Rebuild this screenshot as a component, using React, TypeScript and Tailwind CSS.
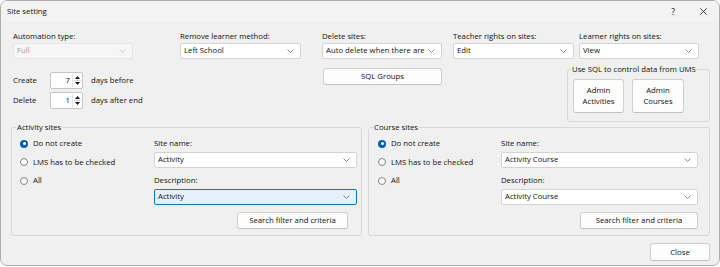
import { clsx } from "clsx";

function Chevron({ light }: { light?: boolean }) {
  return (
    <svg width="7" height="4" viewBox="0 0 7 4" className="shrink-0">
      <path
        d="M0.5 0.5 L3.5 3.5 L6.5 0.5"
        fill="none"
        stroke={light ? "#c4c4c4" : "#6b6b6b"}
        strokeWidth="0.8"
      />
    </svg>
  );
}

function Combo({
  value,
  className,
  disabled,
  focused,
}: {
  value: string;
  className?: string;
  disabled?: boolean;
  focused?: boolean;
}) {
  return (
    <div
      className={clsx(
        "flex h-[16px] items-center gap-[1px] rounded-[2px] border pl-[3px] pr-[6px]",
        disabled && "border-[#e6e6e6] bg-[#f6f6f6] text-[#a3a3a3]",
        focused && "border-[#0078d4] bg-[#e5f1fb]",
        !disabled && !focused && "border-[#d3d3d3] bg-white",
        className,
      )}
    >
      <span className="min-w-0 flex-1 overflow-hidden whitespace-nowrap">{value}</span>
      <Chevron light={disabled} />
    </div>
  );
}

function Label({ children, className }: { children: string; className?: string }) {
  return <div className={clsx("h-[11px] leading-[11px] whitespace-nowrap", className)}>{children}</div>;
}

function Button({ children, className }: { children: React.ReactNode; className?: string }) {
  return (
    <div
      className={clsx(
        "flex items-center justify-center rounded-[3px] border border-[#d0d0d0] border-b-[#c2c2c2] bg-[#fdfdfd] text-center leading-[11px]",
        className,
      )}
    >
      {children}
    </div>
  );
}

function Spin({ value }: { value: string }) {
  return (
    <div className="flex h-[17px] w-[33px] items-center rounded-[2px] border border-[#c6c6c6] bg-white">
      <span className="flex-1 pr-[2px] text-right leading-[11px]">{value}</span>
      <div className="mr-[1px] flex h-[13px] w-[9px] flex-col items-center justify-center gap-[1px] border-l border-[#e2e2e2]">
        <svg width="5" height="3" viewBox="0 0 5 3">
          <path d="M0 3 L2.5 0 L5 3 Z" fill="#1a1a1a" />
        </svg>
        <div className="h-px w-[7px] bg-[#d4d4d4]" />
        <svg width="5" height="3" viewBox="0 0 5 3">
          <path d="M0 0 L2.5 3 L5 0 Z" fill="#1a1a1a" />
        </svg>
      </div>
    </div>
  );
}

function Radio({ label, checked, className }: { label: string; checked?: boolean; className?: string }) {
  return (
    <div className={clsx("flex h-[18.5px] items-center", className)}>
      {checked ? (
        <span className="flex size-[8px] items-center justify-center rounded-full bg-[#005fb8]">
          <span className="size-[3px] rounded-full bg-white" />
        </span>
      ) : (
        <span className="size-[8px] rounded-full border border-[#858585] bg-[#fafafa]" />
      )}
      <span className="ml-[5px] leading-[11px] whitespace-nowrap">{label}</span>
    </div>
  );
}

function SitesBox({
  title,
  name,
  description,
  focused,
  widthClass,
  leftClass,
  comboClass,
  buttonClass,
}: {
  title: string;
  name: string;
  description: string;
  focused?: boolean;
  widthClass: string;
  leftClass: string;
  comboClass: string;
  buttonClass: string;
}) {
  return (
    <fieldset className={clsx("rounded-[3px] border border-[#d8d8d8] p-0", widthClass)}>
      <legend className="ml-[4px] px-[1px] leading-[11px]">{title}</legend>
      <div className="flex pb-[6px]">
        <div className={clsx("pt-[1.5px]", leftClass)}>
          <Radio label="Do not create" checked />
          <Radio label="LMS has to be checked" />
          <Radio label="All" />
        </div>
        <div className="pt-[5px]">
          <Label>Site name:</Label>
          <Combo value={name} className={clsx("mt-[3px]", comboClass)} />
          <Label className="mt-[7px]">Description:</Label>
          <Combo value={description} focused={focused} className={clsx("mt-[3px]", comboClass)} />
          <Button className={clsx("mt-[7px] h-[17px]", buttonClass)}>Search filter and criteria</Button>
        </div>
      </div>
    </fieldset>
  );
}

export default function App() {
  return (
    <div className="h-[267px] w-[720px] bg-white font-['Open_Sans',sans-serif] text-[7.75px] text-[#111]">
      <div className="flex h-[266px] w-[720px] flex-col overflow-hidden rounded-[7px] border border-[#adadad] bg-[#f0f0f0]">
        <div className="flex h-[21px] shrink-0 items-center bg-[#f3f3f3] pl-[6px]">
          <span className="leading-[11px]">Site setting</span>
          <span className="ml-auto mr-[25px] text-[8.5px] leading-[11px]">?</span>
          <svg width="7" height="7" viewBox="0 0 7 7" className="mr-[12px]">
            <path d="M0.3 0.3 L6.7 6.7 M6.7 0.3 L0.3 6.7" stroke="#1a1a1a" strokeWidth="0.8" />
          </svg>
        </div>

        <div className="flex flex-col pt-[9px]">
          {/* top row of combos */}
          <div className="flex pl-[12px]">
            <div className="w-[120px]">
              <Label className="mb-[1px]">Automation type:</Label>
              <Combo value="Full" disabled />
            </div>
            <div className="ml-[47px] w-[121px]">
              <Label className="mb-[1px]">Remove learner method:</Label>
              <Combo value="Left School" />
            </div>
            <div className="ml-[21px] w-[120px]">
              <Label className="mb-[1px]">Delete sites:</Label>
              <Combo value="Auto delete when there are no learners" />
            </div>
            <div className="ml-[11px] w-[121px]">
              <Label className="mb-[1px]">Teacher rights on sites:</Label>
              <Combo value="Edit" />
            </div>
            <div className="ml-[5px] w-[120px]">
              <Label className="mb-[1px]">Learner rights on sites:</Label>
              <Combo value="View" />
            </div>
          </div>

          <div className="flex pl-[12px]">
            <div className="w-[310px] pt-[13px]">
              <div className="flex h-[17px] items-center">
                <span className="w-[37px] leading-[11px]">Create</span>
                <Spin value="7" />
                <span className="ml-[8px] leading-[11px]">days before</span>
              </div>
              <div className="mt-[3px] flex h-[17px] items-center">
                <span className="w-[37px] leading-[11px]">Delete</span>
                <Spin value="1" />
                <span className="ml-[8px] leading-[11px]">days after end</span>
              </div>
            </div>
            <Button className="mt-[9px] h-[17px] w-[119px]">SQL Groups</Button>
            <fieldset className="ml-[125px] mt-[4.5px] w-[143px] rounded-[3px] border border-[#d8d8d8] p-0">
              <legend className="ml-[3px] px-[1px] leading-[11px] whitespace-nowrap">
                Use SQL to control data from UMS
              </legend>
              <div className="flex gap-[8px] pb-[8px] pl-[5px] pt-[4.5px]">
                <Button className="h-[34px] w-[51px]">
                  Admin
                  <br />
                  Activities
                </Button>
                <Button className="h-[34px] w-[52px]">
                  Admin
                  <br />
                  Courses
                </Button>
              </div>
            </fieldset>
          </div>

          <div className="flex gap-[6px] pl-[10px]">
            <SitesBox
              title="Activity sites"
              name="Activity"
              description="Activity"
              focused
              widthClass="w-[351px]"
              leftClass="w-[142px] pl-[8px]"
              comboClass="w-[203px]"
              buttonClass="ml-[83px] w-[111px]"
            />
            <SitesBox
              title="Course sites"
              name="Activity Course"
              description="Activity Course"
              widthClass="w-[342px]"
              leftClass="w-[132px] pl-[9px]"
              comboClass="w-[197px]"
              buttonClass="ml-[79px] w-[118px]"
            />
          </div>

          <div className="flex justify-end pr-[9px] pt-[7px]">
            <Button className="h-[18px] w-[60px]">Close</Button>
          </div>
        </div>
      </div>
    </div>
  );
}
